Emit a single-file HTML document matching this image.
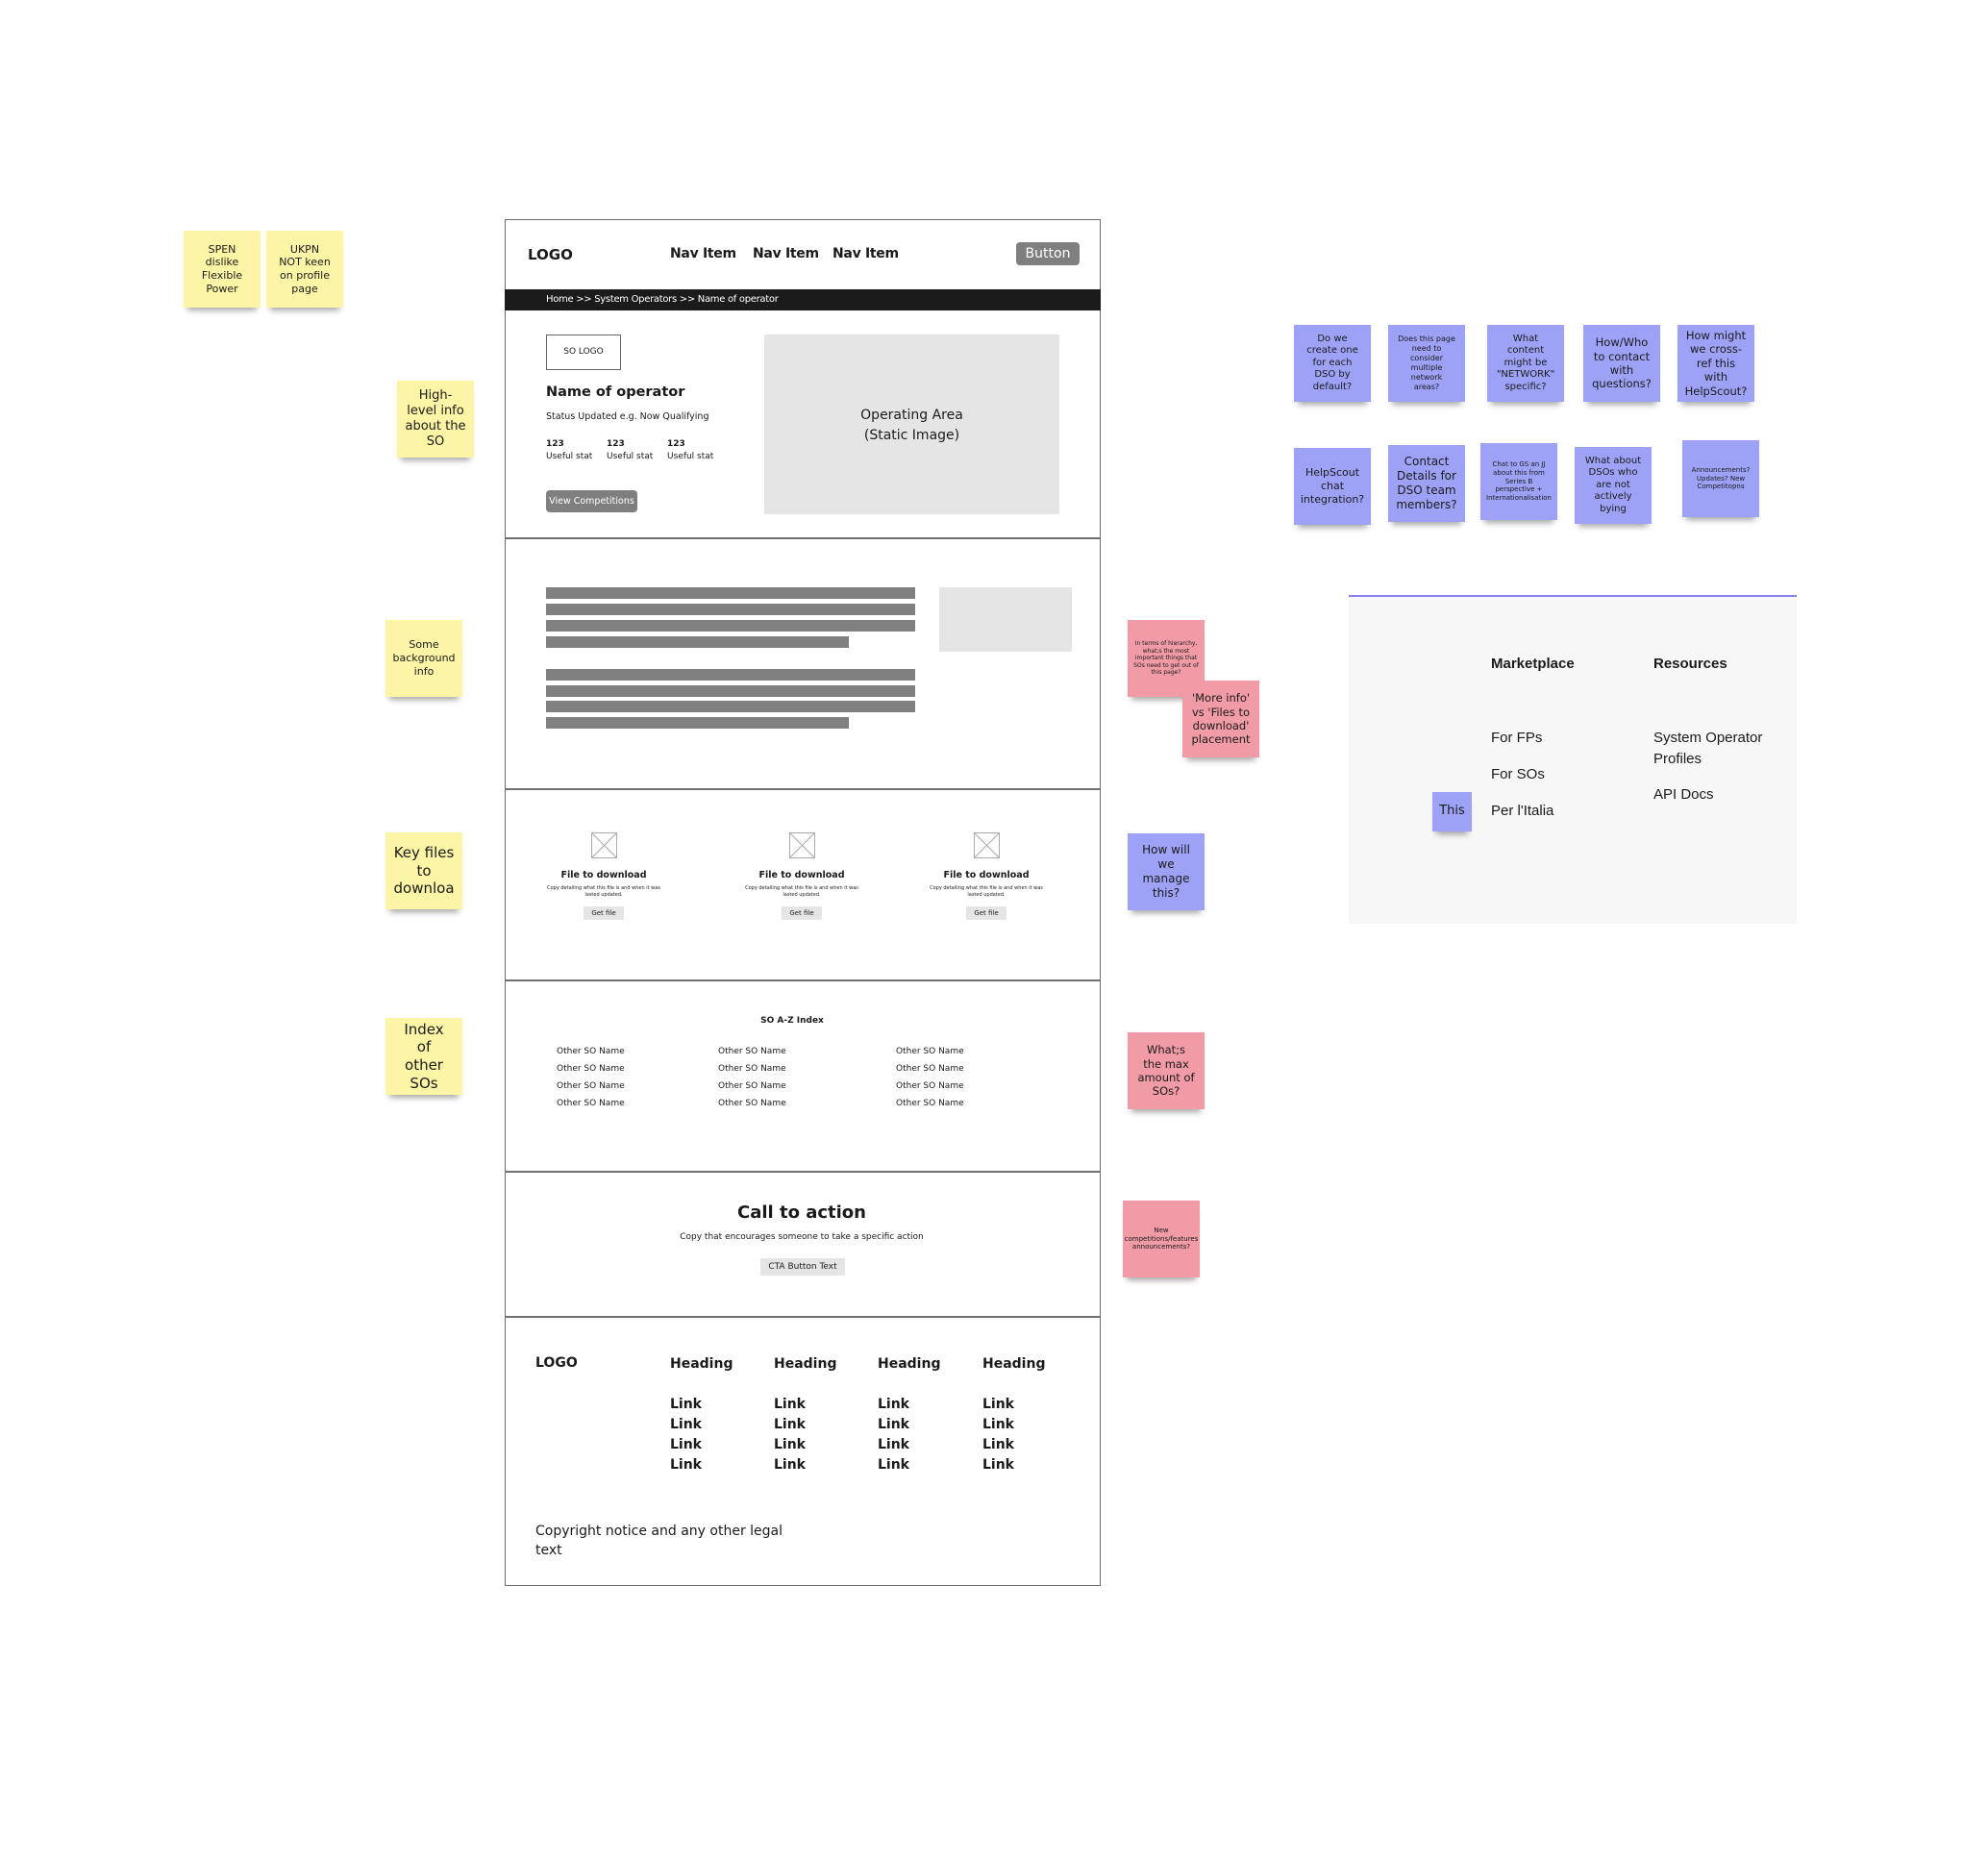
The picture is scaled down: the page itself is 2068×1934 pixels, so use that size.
<!DOCTYPE html>
<html><head><meta charset="utf-8"><style>
*{margin:0;padding:0;box-sizing:border-box}
body{width:2068px;height:1934px;background:#fff;position:relative;overflow:hidden;font-family:"DejaVu Sans","Liberation Sans",sans-serif;color:#1a1a1a}
.a{position:absolute;white-space:nowrap}
.st{position:absolute;width:80px;height:80px;display:flex;align-items:center;justify-content:center;text-align:center;white-space:normal;box-shadow:0 7px 6px -4px rgba(0,0,0,.35);line-height:1.25;padding:3px 8px}
.y{background:#fdf5a6}.p{background:#9da2f7}.k{background:#f19ba6}
.f{font-family:"Liberation Sans",sans-serif}
.bar{position:absolute;background:#808080;height:12px;left:568px}
.hr{position:absolute;left:525px;width:620px;height:2px;background:#6f6f6f}
.b{font-weight:bold}
</style></head><body>
<div class="a" style="left:525px;top:228px;width:620px;height:1422px;border:1.5px solid #6a6a7a"></div>
<div class="a" style="left:525px;top:301px;width:620px;height:22px;background:#1b1b1b"></div>
<div class="a b" style="left:549px;top:256px;font-size:15px">LOGO</div>
<div class="a b" style="left:697px;top:256px;font-size:14px;letter-spacing:-0.3px">Nav Item</div>
<div class="a b" style="left:783px;top:256px;font-size:14px;letter-spacing:-0.3px">Nav Item</div>
<div class="a b" style="left:866px;top:256px;font-size:14px;letter-spacing:-0.3px">Nav Item</div>
<div class="a" style="left:1057px;top:252px;width:66px;height:24px;background:#7f7f7f;border-radius:4px;color:#fff;font-size:14px;text-align:center;line-height:24px">Button</div>
<div class="a" style="left:568px;top:306px;font-size:10px;color:#fff;letter-spacing:-0.3px">Home &gt;&gt; System Operators &gt;&gt; Name of operator</div>
<div class="a" style="left:568px;top:348px;width:78px;height:37px;border:1.5px solid #666;font-size:9px;text-align:center;line-height:34px">SO LOGO</div>
<div class="a b" style="left:568px;top:400px;font-size:14.5px">Name of operator</div>
<div class="a" style="left:568px;top:428px;font-size:9.5px">Status Updated e.g. Now Qualifying</div>
<div class="a" style="left:568px;top:456px;font-size:9px;line-height:13px"><b>123</b><br>Useful stat</div>
<div class="a" style="left:631px;top:456px;font-size:9px;line-height:13px"><b>123</b><br>Useful stat</div>
<div class="a" style="left:694px;top:456px;font-size:9px;line-height:13px"><b>123</b><br>Useful stat</div>
<div class="a" style="left:568px;top:510px;width:95px;height:23px;background:#7f7f7f;border-radius:4px;color:#fff;font-size:9.5px;text-align:center;line-height:23px">View Competitions</div>
<div class="a" style="left:795px;top:348px;width:307px;height:187px;background:#e5e5e5;font-size:14px;text-align:center;padding-top:74px;line-height:21px">Operating Area<br>(Static Image)</div>
<div class="hr" style="top:559px"></div>
<div class="bar" style="top:611px;width:384px"></div>
<div class="bar" style="top:628px;width:384px"></div>
<div class="bar" style="top:645px;width:384px"></div>
<div class="bar" style="top:662px;width:315px"></div>
<div class="bar" style="top:696px;width:384px"></div>
<div class="bar" style="top:713px;width:384px"></div>
<div class="bar" style="top:729px;width:384px"></div>
<div class="bar" style="top:746px;width:315px"></div>
<div class="a" style="left:977px;top:611px;width:138px;height:67px;background:#e5e5e5"></div>
<div class="hr" style="top:820px"></div>
<div class="a" style="left:528px;top:866px;width:200px;text-align:center">
<svg width="27" height="27" viewBox="0 0 27 27"><rect x=".5" y=".5" width="26" height="26" fill="none" stroke="#aaa"/><path d="M1 1L26 26M26 1L1 26" stroke="#aaa"/></svg>
<div class="b" style="font-size:9.5px;margin-top:8px">File to download</div>
<div style="font-size:5px;margin-top:5px;line-height:7px">Copy detailing what this file is and when it was<br>lasted updated.</div>
<div style="display:inline-block;margin-top:8px;background:#e5e5e5;font-size:7px;padding:3px 8px">Get file</div></div>
<div class="a" style="left:734px;top:866px;width:200px;text-align:center">
<svg width="27" height="27" viewBox="0 0 27 27"><rect x=".5" y=".5" width="26" height="26" fill="none" stroke="#aaa"/><path d="M1 1L26 26M26 1L1 26" stroke="#aaa"/></svg>
<div class="b" style="font-size:9.5px;margin-top:8px">File to download</div>
<div style="font-size:5px;margin-top:5px;line-height:7px">Copy detailing what this file is and when it was<br>lasted updated.</div>
<div style="display:inline-block;margin-top:8px;background:#e5e5e5;font-size:7px;padding:3px 8px">Get file</div></div>
<div class="a" style="left:926px;top:866px;width:200px;text-align:center">
<svg width="27" height="27" viewBox="0 0 27 27"><rect x=".5" y=".5" width="26" height="26" fill="none" stroke="#aaa"/><path d="M1 1L26 26M26 1L1 26" stroke="#aaa"/></svg>
<div class="b" style="font-size:9.5px;margin-top:8px">File to download</div>
<div style="font-size:5px;margin-top:5px;line-height:7px">Copy detailing what this file is and when it was<br>lasted updated.</div>
<div style="display:inline-block;margin-top:8px;background:#e5e5e5;font-size:7px;padding:3px 8px">Get file</div></div>
<div class="hr" style="top:1019px"></div>
<div class="a b" style="left:774px;top:1057px;width:100px;text-align:center;font-size:9px">SO A-Z Index</div>
<div class="a" style="left:579px;top:1085px;font-size:9px;line-height:18px">Other SO Name<br>Other SO Name<br>Other SO Name<br>Other SO Name</div>
<div class="a" style="left:747px;top:1085px;font-size:9px;line-height:18px">Other SO Name<br>Other SO Name<br>Other SO Name<br>Other SO Name</div>
<div class="a" style="left:932px;top:1085px;font-size:9px;line-height:18px">Other SO Name<br>Other SO Name<br>Other SO Name<br>Other SO Name</div>
<div class="hr" style="top:1218px"></div>
<div class="a b" style="left:634px;top:1251px;width:400px;text-align:center;font-size:18px">Call to action</div>
<div class="a" style="left:634px;top:1282px;width:400px;text-align:center;font-size:9px">Copy that encourages someone to take a specific action</div>
<div class="a" style="left:791px;top:1309px;width:88px;height:18px;background:#e5e5e5;font-size:9px;text-align:center;line-height:18px">CTA Button Text</div>
<div class="hr" style="top:1369px"></div>
<div class="a b" style="left:557px;top:1410px;font-size:14px">LOGO</div>
<div class="a b" style="left:697px;top:1409px;font-size:14px;line-height:21px">Heading<br><br>Link<br>Link<br>Link<br>Link</div>
<div class="a b" style="left:805px;top:1409px;font-size:14px;line-height:21px">Heading<br><br>Link<br>Link<br>Link<br>Link</div>
<div class="a b" style="left:913px;top:1409px;font-size:14px;line-height:21px">Heading<br><br>Link<br>Link<br>Link<br>Link</div>
<div class="a b" style="left:1022px;top:1409px;font-size:14px;line-height:21px">Heading<br><br>Link<br>Link<br>Link<br>Link</div>
<div class="a" style="left:557px;top:1583px;font-size:14px;line-height:20px">Copyright notice and any other legal<br>text</div>
<div class="a" style="left:1403px;top:619px;width:466px;height:342px;background:#f7f7f7;border-top:2px solid #8a80ec"></div>
<div class="a b f" style="left:1551px;top:682px;font-size:15px">Marketplace</div>
<div class="a b f" style="left:1720px;top:682px;font-size:15px">Resources</div>
<div class="a f" style="left:1551px;top:749px;font-size:15px;line-height:38px">For FPs<br>For SOs<br>Per l'Italia</div>
<div class="a f" style="left:1720px;top:757px;font-size:15px;line-height:22px">System Operator<br>Profiles</div>
<div class="a f" style="left:1720px;top:818px;font-size:15px">API Docs</div>
<div class="st p" style="left:1490px;top:824px;width:41px;height:41px;font-size:13px;padding:0">This</div>
<div class="st y" style="left:191px;top:240px;font-size:11px;padding:3px 12px">SPEN dislike Flexible Power</div>
<div class="st y" style="left:277px;top:240px;font-size:11px;padding:3px 12px">UKPN NOT keen on profile page</div>
<div class="st y" style="left:413px;top:396px;font-size:13px">High-level info about the SO</div>
<div class="st y" style="left:401px;top:645px;font-size:11px;padding:3px 10px">Some background info</div>
<div class="st y" style="left:401px;top:866px;font-size:15px;padding:3px 10px">Key files to downloa</div>
<div class="st y" style="left:401px;top:1059px;font-size:15px;padding:3px 12px">Index of other SOs</div>
<div class="st p" style="left:1346px;top:338px;font-size:10px">Do we create one for each DSO by default?</div>
<div class="st p" style="left:1444px;top:338px;font-size:8px;padding:3px 10px">Does this page need to consider multiple network areas?</div>
<div class="st p" style="left:1547px;top:338px;font-size:10px">What content might be "NETWORK" specific?</div>
<div class="st p" style="left:1647px;top:338px;font-size:11.5px;padding:3px 10px">How/Who to contact with questions?</div>
<div class="st p" style="left:1745px;top:338px;font-size:11.5px;padding:3px 7px">How might we cross-ref this with HelpScout?</div>
<div class="st p" style="left:1346px;top:466px;font-size:11px">HelpScout chat integration?</div>
<div class="st p" style="left:1444px;top:463px;font-size:12px;padding:3px 4px">Contact Details for DSO team members?</div>
<div class="st p" style="left:1540px;top:461px;font-size:7px;padding:3px 6px">Chat to GS an JJ about this from Series B perspective + Internationalisation</div>
<div class="st p" style="left:1638px;top:465px;font-size:10px;padding:3px 10px">What about DSOs who are not actively bying</div>
<div class="st p" style="left:1750px;top:458px;font-size:7px">Announcements? Updates? New Competitopns</div>
<div class="st p" style="left:1173px;top:867px;font-size:12px">How will we manage this?</div>
<div class="st k" style="left:1173px;top:645px;font-size:6px;padding:3px 5px">In terms of hierarchy, what;s the most important things that SOs need to get out of this page?</div>
<div class="st k" style="left:1230px;top:708px;font-size:11.5px;padding:3px 5px">'More info' vs 'Files to download' placement</div>
<div class="st k" style="left:1173px;top:1074px;font-size:11.5px;padding:3px 10px">What;s the max amount of SOs?</div>
<div class="st k" style="left:1168px;top:1249px;font-size:7px">New competitions/features announcements?</div>
</body></html>
